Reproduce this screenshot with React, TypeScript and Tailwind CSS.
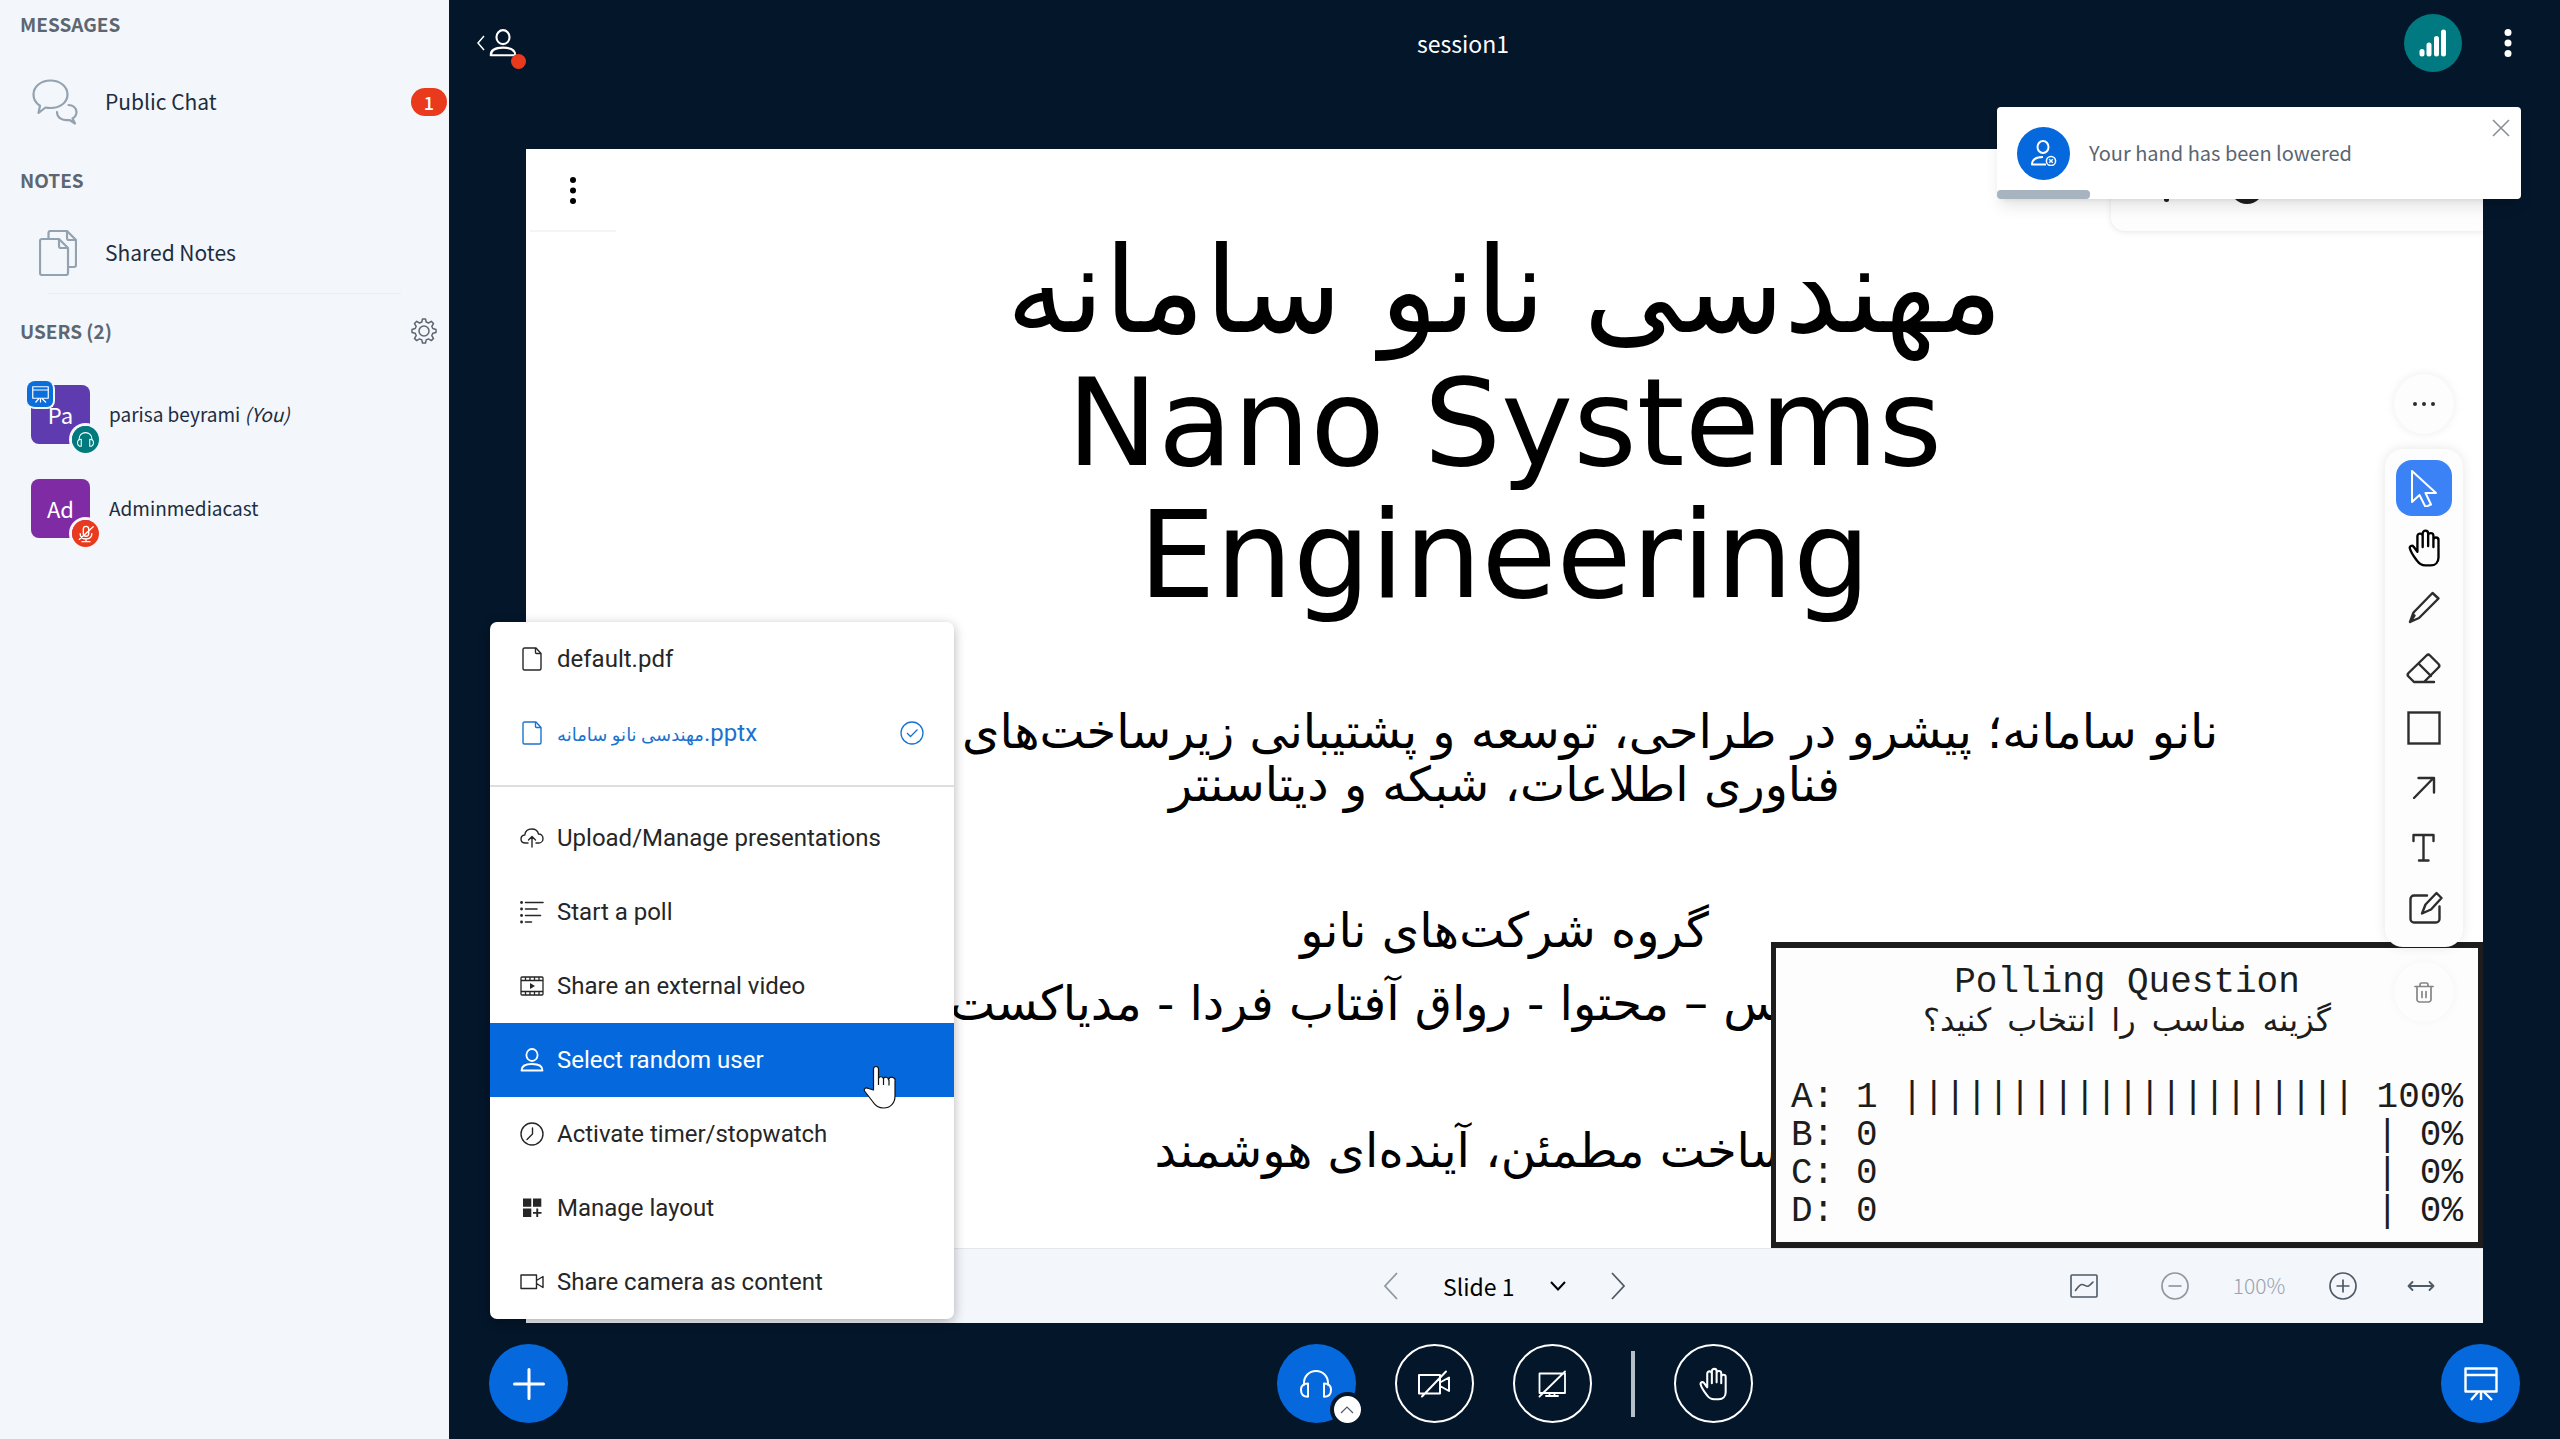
import type { ReactNode } from "react";
import clsx from "clsx";

type IconProps = { className?: string };

function UserIcon({ className }: IconProps) {
  return (
    <svg className={className} viewBox="0 0 24 24" fill="none" stroke="currentColor" strokeWidth="1.8" strokeLinejoin="round" aria-hidden="true">
      <ellipse cx="12" cy="7" rx="5.6" ry="6" />
      <path d="M1.5 22.5c0-4.2 3.8-6.5 10.5-6.5s10.500 2.300 10.500 6.500z" />
    </svg>
  );
}

function ChatIcon({ className }: IconProps) {
  return (
    <svg className={className} viewBox="0 0 46 46" fill="none" stroke="currentColor" strokeWidth="2.200" strokeLinejoin="round" strokeLinecap="round" aria-hidden="true">
      <path d="M18.500 1.500C9 1.500 1.500 7.500 1.500 15.500c0 5 2.500 8.800 6.500 11.300L6.500 34l7-5.500c1.500.400 3.200.500 5 .500 9.500 0 17-5.500 17-13.500s-7.500-14-17-14z" />
      <path d="M36.500 26c4.500 0 8 3 8 7 0 2.800-1.500 5-4 6.500l2.500 5-5.500-3.500c-7 1-12.500-2-12.500-8" />
    </svg>
  );
}

function NotesIcon({ className }: IconProps) {
  return (
    <svg className={className} viewBox="0 0 38 46" fill="none" stroke="currentColor" strokeWidth="2.200" strokeLinejoin="round" aria-hidden="true">
      <path d="M9.500 8.500V3a2 2 0 0 1 2-2H28l9 9v25a2 2 0 0 1-2 2h-5.500" />
      <path d="M28 1v7a2 2 0 0 0 2 2h7" />
      <path d="M1 11a2 2 0 0 1 2-2h17l9 9v25a2 2 0 0 1-2 2H3a2 2 0 0 1-2-2z" />
      <path d="M20 9v7a2 2 0 0 0 2 2h7" />
    </svg>
  );
}

function GearIcon({ className }: IconProps) {
  return (
    <svg className={className} viewBox="0 0 26 26" fill="none" stroke="currentColor" strokeWidth="1.500" strokeLinejoin="round" aria-hidden="true">
      <circle cx="13" cy="13" r="5" />
      <path d="M11.500 1h3l.7 3 2.300 1 2.800-1.700 2.200 2.200L20.800 8.300l1 2.200 3.200 1v3l-3.200.800-1 2.300 1.700 2.800-2.200 2.200-2.800-1.700-2.300 1-.7 3.100h-3l-.7-3.100-2.300-1-2.800 1.700-2.200-2.200 1.700-2.800-1-2.300L1 14.500v-3l3.200-1 1-2.200-1.700-2.800 2.200-2.200L8.500 5l2.300-1z" />
    </svg>
  );
}

function HeadphonesIcon({ className }: IconProps) {
  return (
    <svg className={className} viewBox="0 0 32 28" fill="none" stroke="currentColor" strokeWidth="2" strokeLinejoin="round" aria-hidden="true">
      <path d="M4 15.500V13C4 6.500 9 1 16 1s12 5.500 12 12v2.500" />
      <path d="M8 13.500v13.300c-4.500 0-7-2.500-7-6.800 0-4 2.500-6.500 7-6.500z" />
      <path d="M24 13.500v13.300c4.500 0 7-2.500 7-6.800 0-4-2.500-6.500-7-6.500z" />
    </svg>
  );
}

function MicMutedIcon({ className }: IconProps) {
  return (
    <svg className={className} viewBox="0 0 20 20" fill="none" stroke="currentColor" strokeWidth="1.500" strokeLinecap="round" aria-hidden="true">
      <rect x="7" y="1.500" width="6" height="11" rx="3" />
      <path d="M3.500 9.500c0 4 2.500 6 6.500 6s6.500-2 6.500-6M10 15.500V18M5.500 18.500h9M18 2 2.500 16" />
    </svg>
  );
}

function PresentationIcon({ className }: IconProps) {
  return (
    <svg className={className} viewBox="0 0 34 34" fill="none" stroke="currentColor" strokeWidth="2.400" strokeLinejoin="round" aria-hidden="true">
      <path d="M1.500 1.500h31v23h-31zM1.500 8h31" />
      <path d="M14 25 7 33M20 25l8 8M17 25v8" />
    </svg>
  );
}

function FileIcon({ className }: IconProps) {
  return (
    <svg className={className} viewBox="0 0 24 24" fill="none" stroke="currentColor" strokeWidth="1.400" strokeLinejoin="round" aria-hidden="true">
      <path d="M3 2.500A1.500 1.500 0 0 1 4.500 1h11.500l5 5.500v15a1.500 1.500 0 0 1-1.500 1.500h-15A1.500 1.500 0 0 1 3 21.500z" />
      <path d="M15.500 1v4.500a1 1 0 0 0 1 1H21" />
    </svg>
  );
}

function UploadIcon({ className }: IconProps) {
  return (
    <svg className={className} viewBox="0 0 24 24" fill="none" stroke="currentColor" strokeWidth="1.400" strokeLinejoin="round" strokeLinecap="round" aria-hidden="true">
      <path d="M8 17H5.500C2.800 17 1 15.200 1 13s1.600-3.800 3.800-4C5.200 5.400 8 3 11.800 3c3.500 0 6 2 6.700 5 2.600 0 4.500 1.900 4.500 4.400S21.100 17 18.700 17H16" />
      <path d="M12 21v-10M8.500 14 12 10.500l3.500 3.500" />
    </svg>
  );
}

function PollIcon({ className }: IconProps) {
  return (
    <svg className={className} viewBox="0 0 24 24" fill="none" stroke="currentColor" strokeWidth="1.600" strokeLinecap="round" aria-hidden="true">
      <path d="M5.500 2.500H23M5.500 9h11.500M5.500 15.500h15M5.500 22h6" />
      <path d="M1.500 2.500h.1M1.500 9h.1M1.500 15.500h.1M1.500 22h.1" strokeWidth="2.800" />
    </svg>
  );
}

function VideoFileIcon({ className }: IconProps) {
  return (
    <svg className={className} viewBox="0 0 24 24" fill="none" stroke="currentColor" strokeWidth="1.300" aria-hidden="true">
      <rect x="1" y="3" width="22" height="18" rx="1" />
      <path d="M1 6.500h22M1 17.500h22M5.500 3v3.500M10 3v3.500M14.500 3v3.500M19 3v3.500M5.500 17.500V21M10 17.500V21M14.500 17.500V21M19 17.500V21" />
      <path d="M10 9v6l5-3z" fill="currentColor" stroke="none" />
    </svg>
  );
}

function ClockIcon({ className }: IconProps) {
  return (
    <svg className={className} viewBox="0 0 24 24" fill="none" stroke="currentColor" strokeWidth="1.400" strokeLinecap="round" aria-hidden="true">
      <circle cx="12" cy="12" r="11" />
      <path d="M12.500 6v6L7 17.500" />
    </svg>
  );
}

function LayoutIcon({ className }: IconProps) {
  return (
    <svg className={className} viewBox="0 0 24 24" fill="currentColor" aria-hidden="true">
      <path d="M3 2.500h8.300v8.300H3zM13 2.500h8.300v8.300H13zM3 12.600h8.300V21H3zM16.300 12.600h1.900v3.300h3.300v1.900h-3.300V21h-1.900v-3.200H13v-1.900h3.300z" />
    </svg>
  );
}

function CameraIcon({ className }: IconProps) {
  return (
    <svg className={className} viewBox="0 0 24 24" fill="none" stroke="currentColor" strokeWidth="1.400" strokeLinejoin="round" aria-hidden="true">
      <path d="M1 5h15.500v13.500H1zM16.500 10.500l6.500-4v11l-6.500-4z" />
    </svg>
  );
}

function CameraOffIcon({ className }: IconProps) {
  return (
    <svg className={className} viewBox="0 0 34 28" fill="none" stroke="currentColor" strokeWidth="2" strokeLinejoin="round" strokeLinecap="round" aria-hidden="true">
      <path d="M2 5h21v18.500H2zM23 12.500l9-5v13.500l-9-5M5 26.500 29 1.500" />
    </svg>
  );
}

function ScreenOffIcon({ className }: IconProps) {
  return (
    <svg className={className} viewBox="0 0 28 28" fill="none" stroke="currentColor" strokeWidth="1.800" strokeLinejoin="round" strokeLinecap="round" aria-hidden="true">
      <path d="M1.500 3.500h25.500v19.500H1.500zM8 26h12M11.500 23.500V26M16.500 23.500V26M1.500 26.500 27 1.500" />
    </svg>
  );
}

function HandIcon({ className }: IconProps) {
  return (
    <svg className={className} viewBox="0 0 34 40" fill="none" stroke="currentColor" strokeWidth="2.500" strokeLinejoin="round" strokeLinecap="round" aria-hidden="true">
      <path d="M10 20V7.500a2.800 2.800 0 0 1 5.600 0V19M15.600 18V4.500a2.900 2.900 0 0 1 5.800 0V18M21.400 7a2.800 2.800 0 0 1 5.600 0v12M27 11.500a2.700 2.700 0 0 1 5.400 0V30c0 5-3.400 8.500-8.400 8.500h-5.500c-4 0-6.500-1.500-8.500-4.500C7.500 30.500 3.500 26 2 20.500c-.7-2.500 2.300-3.800 4-1.800l4 5.300V19" />
    </svg>
  );
}

function KickIcon({ className }: IconProps) {
  return (
    <svg className={className} viewBox="0 0 26 26" fill="none" stroke="currentColor" strokeWidth="2" strokeLinejoin="round" aria-hidden="true">
      <ellipse cx="12" cy="7" rx="5.500" ry="6" />
      <path d="M15 24.500H1c0-5 4-7.500 11-7.500" />
      <circle cx="20" cy="21" r="4.600" strokeWidth="1.500" />
      <path d="m18.200 19.200 3.600 3.600m0-3.600-3.600 3.600" strokeWidth="1.400" />
    </svg>
  );
}

const chats: { label: string; icon: ReactNode; unread?: number }[] = [
  { label: "Public Chat", icon: <ChatIcon className="size-[46px]" />, unread: 1 },
];

const files = [
  { name: "default", extension: ".pdf", current: false },
  { name: "مهندسی نانو سامانه", extension: ".pptx", current: true },
];

const actions = [
  { label: "Upload/Manage presentations", Icon: UploadIcon },
  { label: "Start a poll", Icon: PollIcon },
  { label: "Share an external video", Icon: VideoFileIcon },
  { label: "Select random user", Icon: UserIcon, active: true },
  { label: "Activate timer/stopwatch", Icon: ClockIcon },
  { label: "Manage layout", Icon: LayoutIcon },
  { label: "Share camera as content", Icon: CameraIcon },
];

const answers = [
  { key: "A", votes: 1, percent: 100 },
  { key: "B", votes: 0, percent: 0 },
  { key: "C", votes: 0, percent: 0 },
  { key: "D", votes: 0, percent: 0 },
];

const toolStroke = {
  fill: "none",
  stroke: "currentColor",
  strokeWidth: 2.4,
  strokeLinejoin: "round",
  strokeLinecap: "round",
} as const;

const tools: { name: string; drawing: ReactNode }[] = [
  {
    name: "Select",
    drawing: <path d="M7 2v31l7.500-7 6 12 5.500-2.500L20.500 24H31z" strokeWidth="2" />,
  },
  { name: "Hand", drawing: null },
  {
    name: "Draw",
    drawing: <path d="M5 33 8.500 23.500 27.500 4l6 5.500L14 29zM5 33l4.500-6.500" />,
  },
  {
    name: "Eraser",
    drawing: <path d="M29 33H9l-5.500-5.500a2.500 2.500 0 0 1 0-3.500L21.500 6.500a2.500 2.500 0 0 1 3.500 0l8.500 8.500a2.500 2.500 0 0 1 0 3.500L19 33M13.500 14.500 26 27" />,
  },
  { name: "Rectangle", drawing: <rect x="3.500" y="3.500" width="31" height="31" strokeLinejoin="miter" /> },
  { name: "Arrow", drawing: <path d="M9 29 28 9.500M13.500 9H29v14.500" /> },
  { name: "Text", drawing: <path d="M8.500 12V6h20v6M18.500 6v25.500M14 31.500h9.500" /> },
  {
    name: "Note",
    drawing: (
      <path d="M22 6.500H9A3.500 3.500 0 0 0 5.500 10v20A3.500 3.500 0 0 0 9 33.500h22a3.500 3.500 0 0 0 3.500-3.500V17.500M31.500 4l5 5-10.500 11.500L17 24.500l3.500-9z" />
    ),
  },
];

function SectionTitle({ children }: { children: ReactNode }) {
  return <h2 className="text-[19px] leading-7 font-semibold text-[#5d6771]">{children}</h2>;
}

function Avatar({ initials, color, badge, presenter }: { initials: string; color: string; badge: ReactNode; presenter?: boolean }) {
  return (
    <span className={clsx("relative flex size-[59px] shrink-0 items-center justify-center rounded-lg text-[22px] text-white", color)}>
      {initials}
      {presenter && (
        <span className="absolute -top-1 -left-1 flex size-7 items-center justify-center rounded-lg border-r-2 border-b-2 border-[#f3f6fb] bg-[#0a6fdc]">
          <PresentationIcon className="size-[17px]" />
        </span>
      )}
      <span className="absolute -right-3 -bottom-3 rounded-full border-3 border-[#f3f6fb]">{badge}</span>
    </span>
  );
}

function Sidebar() {
  return (
    <aside className="flex w-[449px] shrink-0 flex-col bg-[#f3f6fb] text-[21px] text-[#1c2d40]">
      <div className="px-5 pt-[10px]">
        <SectionTitle>MESSAGES</SectionTitle>
      </div>
      {chats.map((chat) => (
        <a key={chat.label} href="#chat" className="mt-[29px] flex h-[70px] items-center pr-[2px] pl-8">
          <span className="w-[73px] text-[#93a2b1]">{chat.icon}</span>
          <span className="flex-1">{chat.label}</span>
          <span className="flex h-7 w-9 items-center justify-center rounded-full bg-[#ea3a1e] text-lg font-medium text-white">{chat.unread}</span>
        </a>
      ))}
      <div className="mt-[29px] px-5">
        <SectionTitle>NOTES</SectionTitle>
      </div>
      <a href="#notes" className="mt-6 flex h-[70px] items-center pl-[39px]">
        <span className="w-[66px] text-[#93a2b1]">
          <NotesIcon className="h-[46px] w-[38px]" />
        </span>
        Shared Notes
      </a>
      <hr className="mx-12 mt-[5px] border-0 border-t border-[#eaeef3]" />
      <div className="mt-[23px] flex items-center justify-between pr-3 pl-5">
        <SectionTitle>USERS (2)</SectionTitle>
        <button type="button" aria-label="Manage users" className="text-[#5d6771]">
          <GearIcon className="size-[26px]" />
        </button>
      </div>
      <ul className="mt-10 flex flex-col gap-[35px] pl-[31px] text-[19px]">
        <li className="flex items-center gap-[19px]">
          <Avatar
            initials="Pa"
            color="bg-[#5e3cb0]"
            presenter
            badge={
              <span className="flex size-[27px] items-center justify-center rounded-full bg-[#007a7c]">
                <HeadphonesIcon className="h-[15px] w-[17px]" />
              </span>
            }
          />
          <span>
            parisa beyrami <em>(You)</em>
          </span>
        </li>
        <li className="flex items-center gap-[19px]">
          <Avatar
            initials="Ad"
            color="bg-[#7f2ba4]"
            badge={
              <span className="flex size-[27px] items-center justify-center rounded-full bg-[#ea3a1e]">
                <MicMutedIcon className="size-[18px]" />
              </span>
            }
          />
          <span>Adminmediacast</span>
        </li>
      </ul>
    </aside>
  );
}

function Header() {
  return (
    <header className="flex h-[86px] items-center pr-[38px] pl-7 text-white">
      <button type="button" aria-label="Toggle user list" className="relative flex w-[45px] items-center">
        <svg className="h-4 w-2" viewBox="0 0 8 16" fill="none" stroke="currentColor" strokeWidth="1.500" aria-hidden="true">
          <path d="M7 1 1 8l6 7" />
        </svg>
        <UserIcon className="ml-1 size-7" />
        <span className="absolute -bottom-3 left-[34px] size-[15px] rounded-full bg-[#ea3a1e]" />
      </button>
      <h1 className="flex-1 text-center text-[23px]">session1</h1>
      <div className="flex items-center gap-8">
        <button type="button" aria-label="Connection status" className="flex size-[58px] items-center justify-center rounded-full bg-[#007a80]">
          <svg className="size-7" viewBox="0 0 28 28" stroke="currentColor" strokeWidth="5" strokeLinecap="round" aria-hidden="true">
            <path d="M3 25v-2.500M10 25v-9M17.500 25V9.500M24.500 25V3" />
          </svg>
        </button>
        <button type="button" aria-label="Options" className="flex w-7 justify-center">
          <svg className="h-7 w-2" viewBox="0 0 8 28" fill="currentColor" aria-hidden="true">
            <circle cx="4" cy="3.500" r="3.500" />
            <circle cx="4" cy="14" r="3.500" />
            <circle cx="4" cy="24.500" r="3.500" />
          </svg>
        </button>
      </div>
    </header>
  );
}

function Toast() {
  return (
    <div role="status" className="absolute top-[107px] right-[39px] z-20 flex h-[92px] w-[524px] items-center rounded bg-white pl-5 shadow-lg">
      <span className="flex size-[53px] items-center justify-center rounded-full bg-[#0569dd] text-white">
        <KickIcon className="size-[26px]" />
      </span>
      <p className="ml-[19px] text-[20px] text-[#5a6572]">Your hand has been lowered</p>
      <button type="button" aria-label="Close" className="absolute top-3 right-[11px] text-[#858b93]">
        <svg className="size-[18px]" viewBox="0 0 18 18" stroke="currentColor" strokeWidth="1.500" aria-hidden="true">
          <path d="m1 1 16 16M17 1 1 17" />
        </svg>
      </button>
      <span className="absolute bottom-0 left-0 h-[9px] w-[93px] rounded bg-[#a7b3bf]" />
    </div>
  );
}

function Poll() {
  return (
    <div className="absolute right-0 bottom-0 w-[712px] border-x-[5px] border-y-[6px] border-[#1d1d1d] bg-[#fdfdfd] px-[15px] font-['Liberation_Mono',monospace] text-[36px] leading-[38px] text-[#1d1d1d]">
      <div className="pt-4 text-center">
        <p>Polling Question</p>
        <p dir="rtl" className="h-[38px] font-['Noto_Sans_Mono_CJK_SC','DejaVu_Sans',sans-serif] text-[32px] leading-[30px]">
          گزینه مناسب را انتخاب کنید؟
        </p>
      </div>
      <table className="mt-[39px] mb-[11px] w-full">
        <tbody>
          {answers.map((a) => (
            <tr key={a.key}>
              <td className="w-[65px] p-0">{a.key}:</td>
              <td className="p-0">{a.votes}</td>
              <td className="p-0 text-right">
                {"|".repeat(a.percent ? 21 : 1)} {a.percent}%
              </td>
            </tr>
          ))}
        </tbody>
      </table>
    </div>
  );
}

function Toolbar() {
  return (
    <div className="absolute top-[225px] right-5 flex flex-col items-center gap-[15px] text-[#2d2d2d]">
      <button type="button" aria-label="More" className="flex size-[60px] items-center justify-center rounded-full bg-[#fdfdfd] shadow-[0_0_10px_rgba(0,0,0,0.08)]">
        <svg className="h-1 w-[22px]" viewBox="0 0 22 4" fill="currentColor" aria-hidden="true">
          <circle cx="2" cy="2" r="2" />
          <circle cx="11" cy="2" r="2" />
          <circle cx="20" cy="2" r="2" />
        </svg>
      </button>
      <div className="flex flex-col gap-1 rounded-[18px] bg-[#fdfdfd] px-[11px] py-[11px] shadow-[0_0_12px_rgba(0,0,0,0.1)]">
        {tools.map((tool, i) => (
          <button
            key={tool.name}
            type="button"
            aria-label={tool.name}
            className={clsx("flex size-14 items-center justify-center rounded-2xl", i === 0 && "bg-[#3b82f6] text-white", i === 1 && "text-black")}
          >
            {tool.drawing ? (
              <svg className="size-[38px]" viewBox="0 0 38 38" {...toolStroke} aria-hidden="true">
                {tool.drawing}
              </svg>
            ) : (
              <HandIcon className="h-[38px] w-8" />
            )}
          </button>
        ))}
      </div>
      <button type="button" aria-label="Delete" className="flex size-[60px] items-center justify-center rounded-full bg-[#fdfdfd] text-[#858585] shadow-[0_0_10px_rgba(0,0,0,0.04)]">
        <svg className="size-[22px]" viewBox="0 0 22 22" fill="none" stroke="currentColor" strokeWidth="1.700" strokeLinejoin="round" strokeLinecap="round" aria-hidden="true">
          <path d="M2 5.500h18M7 5.500V3.500A1.500 1.500 0 0 1 8.500 2h5A1.500 1.500 0 0 1 15 3.500v2M4 5.500v13A2.500 2.500 0 0 0 6.500 21h9a2.500 2.500 0 0 0 2.500-2.500v-13M9 10.500v6M13 10.500v6" />
        </svg>
      </button>
    </div>
  );
}

function Slide() {
  return (
    <div className="relative flex-1 overflow-hidden bg-white font-['DejaVu_Sans',sans-serif] text-black">
      <h2 className="mt-[75px] text-center text-[122px] leading-[132px]">
        <span dir="rtl" className="text-[120px]">
          مهندسی نانو سامانه
        </span>
        <br />
        Nano Systems
        <br />
        Engineering
      </h2>
      <div dir="rtl" className="mt-[84px] text-center text-[48px] leading-[53px]">
        <p className="pr-[265px] text-right">نانو سامانه؛ پیشرو در طراحی، توسعه و پشتیبانی زیرساخت‌های</p>
        <p>فناوری اطلاعات، شبکه و دیتاسنتر</p>
        <p className="mt-[93px]">گروه شرکت‌های نانو</p>
        <p className="mt-5 pl-[424px] text-left">رس – محتوا - رواق آفتاب فردا - مدیاکست</p>
        <p className="mt-[94px]">زیرساخت مطمئن، آینده‌ای هوشمند</p>
      </div>
      <button type="button" aria-label="Presentation options" className="absolute top-0 left-0 flex h-[83px] w-[94px] items-center justify-center">
        <svg className="h-7 w-2" viewBox="0 0 8 28" fill="currentColor" aria-hidden="true">
          <circle cx="4" cy="3" r="3" />
          <circle cx="4" cy="13.500" r="3" />
          <circle cx="4" cy="24" r="3" />
        </svg>
        <span className="absolute bottom-0 left-1 h-[2px] w-[86px] bg-[#f4f4f4]" />
      </button>
      {/* Style panel, mostly under the toast */}
      <div className="absolute top-0 right-0 h-[82px] w-[372px] rounded-bl-[14px] bg-[#fdfdfd] shadow-[0_1px_6px_rgba(0,0,0,0.1)]">
        <span className="absolute top-[21px] left-[119px] size-[34px] rounded-full bg-[#1d1d1d]" />
        <span className="absolute top-[48px] left-[53px] h-[5px] w-[5px] rounded-full bg-[#1d1d1d]" />
      </div>
      <Poll />
      <Toolbar />
    </div>
  );
}

function SlideControls() {
  return (
    <div className="grid h-[75px] grid-cols-[1fr_auto_1fr] items-center border-t border-[#e3e7eb] bg-[#f3f6fb] text-[#4e5a66]">
      <span />
      <div className="flex items-center gap-[45px]">
        <button type="button" aria-label="Previous slide" className="opacity-60">
          <svg className="h-7 w-[14px]" viewBox="0 0 14 28" fill="none" stroke="currentColor" strokeWidth="1.800" aria-hidden="true">
            <path d="M13 1 1 14l12 13" />
          </svg>
        </button>
        <div className="relative flex items-center text-black">
          <select aria-label="Slide" className="w-[123px] appearance-none bg-transparent text-[23px]">
            <option>Slide 1</option>
          </select>
          <svg className="pointer-events-none absolute right-0 h-[10px] w-4" viewBox="0 0 16 10" fill="none" stroke="currentColor" strokeWidth="2" aria-hidden="true">
            <path d="m1 1 7 7.500L15 1" />
          </svg>
        </div>
        <button type="button" aria-label="Next slide">
          <svg className="h-7 w-[14px]" viewBox="0 0 14 28" fill="none" stroke="currentColor" strokeWidth="1.800" aria-hidden="true">
            <path d="m1 1 12 13L1 27" />
          </svg>
        </button>
      </div>
      <div className="flex items-center justify-end pr-12">
        <button type="button" aria-label="Whiteboard">
          <svg className="mr-[63px] h-6 w-7" viewBox="0 0 28 24" fill="none" stroke="currentColor" strokeWidth="1.600" strokeLinecap="round" aria-hidden="true">
            <rect x="1" y="1" width="26" height="22" rx="1" />
            <path d="M5.500 16.500C8 13 9.500 10.500 12 10.500s4 2.500 6.500 1.500c2-1 3-2.500 4.500-4" />
          </svg>
        </button>
        <button type="button" aria-label="Zoom out" className="opacity-60">
          <svg className="size-7" viewBox="0 0 28 28" fill="none" stroke="currentColor" strokeWidth="1.700" aria-hidden="true">
            <circle cx="14" cy="14" r="13" />
            <path d="M7.500 14h13" />
          </svg>
        </button>
        <span className="w-[140px] text-center text-[21px] font-light text-[#9aa3ad]">100%</span>
        <button type="button" aria-label="Zoom in">
          <svg className="size-7" viewBox="0 0 28 28" fill="none" stroke="currentColor" strokeWidth="1.700" aria-hidden="true">
            <circle cx="14" cy="14" r="13" />
            <path d="M7.500 14h13M14 7.500v13" />
          </svg>
        </button>
        <button type="button" aria-label="Fit to width">
          <svg className="ml-[50px] h-3 w-7" viewBox="0 0 28 12" fill="none" stroke="currentColor" strokeWidth="1.800" strokeLinejoin="round" strokeLinecap="round" aria-hidden="true">
            <path d="M1.500 6h25M5.500 2l-4 4 4 4M22.500 2l4 4-4 4" />
          </svg>
        </button>
      </div>
    </div>
  );
}

function ActionsMenu() {
  return (
    <div role="menu" className="absolute bottom-[120px] left-[41px] z-10 flex w-[464px] flex-col overflow-hidden rounded-[7px] bg-white font-[Roboto,'DejaVu_Sans',sans-serif] text-[24px] text-[#262626] shadow-[0_3px_12px_rgba(0,0,0,0.3)]">
      {files.map((file) => (
        <button key={file.name} type="button" role="menuitem" className={clsx("flex h-[74px] items-center gap-[13px] px-[30px]", file.current && "text-[#1a73d0]")}>
          <FileIcon className="size-6" />
          <span>
            <span className={clsx(file.current && "text-[18px]")}>{file.name}</span>
            {file.extension}
          </span>
          {file.current && (
            <svg className="ml-auto size-6" viewBox="0 0 24 24" fill="none" stroke="currentColor" strokeWidth="1.300" aria-hidden="true">
              <circle cx="12" cy="12" r="11" />
              <path d="m7 12 3.500 3.500 7-7" />
            </svg>
          )}
        </button>
      ))}
      <hr className="mt-[15px] mb-[14px] border-0 border-t-2 border-[#dcdfe2]" />
      {actions.map(({ label, Icon, active }) => (
        <button key={label} type="button" role="menuitem" className={clsx("flex h-[74px] items-center gap-[13px] px-[30px]", active && "bg-[#0569dd] text-white")}>
          <Icon className="size-6" />
          {label}
        </button>
      ))}
      {/* Pointer over the highlighted item */}
      <svg className="absolute top-[443px] left-[373px] h-11 w-[34px]" viewBox="0 0 34 44" fill="white" stroke="#111" strokeWidth="1.200" strokeLinejoin="round" aria-hidden="true">
        <path d="M10.500 25V4a2.500 2.500 0 0 1 5 0v9.500a2.600 2.600 0 0 1 5 .300 2.600 2.600 0 0 1 5 1 2.600 2.600 0 0 1 6.500 1.700V31c0 7-4.500 12-11.500 12-5 0-8-2-10.500-6L1.500 26c-1-2.500 1.500-4 4-2.500z" />
        <path d="M15.500 13v7M20.500 14v6M26 15v5.500" />
      </svg>
    </div>
  );
}

const roundButton = "flex size-[79px] items-center justify-center rounded-full text-white";

function ActionsBar() {
  return (
    <footer className="flex h-[116px] items-center justify-between px-10 pt-[5px]">
      <button type="button" aria-label="Actions" className={clsx(roundButton, "bg-[#0569dd]")}>
        <svg className="size-8" viewBox="0 0 32 32" stroke="currentColor" strokeWidth="3" strokeLinecap="round" aria-hidden="true">
          <path d="M16 1.500v29M1.500 16h29" />
        </svg>
      </button>
      <div className="ml-5 flex items-center gap-[39px]">
        <div className="relative">
          <button type="button" aria-label="Leave audio" className={clsx(roundButton, "bg-[#0569dd]")}>
            <HeadphonesIcon className="h-7 w-8" />
          </button>
          <button type="button" aria-label="Change audio device" className="absolute -right-[9px] -bottom-1 flex size-[35px] items-center justify-center rounded-full border-4 border-[#04162a] bg-white text-[#4e5a66]">
            <svg className="h-2 w-[14px]" viewBox="0 0 14 8" fill="none" stroke="currentColor" strokeWidth="1.200" aria-hidden="true">
              <path d="m1 7 6-6 6 6" />
            </svg>
          </button>
        </div>
        <button type="button" aria-label="Share webcam" className={clsx(roundButton, "border-2 border-white")}>
          <CameraOffIcon className="h-7 w-[34px]" />
        </button>
        <button type="button" aria-label="Share your screen" className={clsx(roundButton, "border-2 border-white")}>
          <ScreenOffIcon className="size-7" />
        </button>
        <span className="h-[66px] w-1 bg-[#b5bfca]" />
        <button type="button" aria-label="Raise your hand" className={clsx(roundButton, "border-2 border-white")}>
          <HandIcon className="h-[34px] w-7" />
        </button>
      </div>
      <button type="button" aria-label="Minimize presentation" className={clsx(roundButton, "bg-[#0569dd]")}>
        <PresentationIcon className="size-[34px]" />
      </button>
    </footer>
  );
}

export default function App() {
  return (
    <div className="flex min-h-screen bg-[#04162a] font-['Noto_Sans_CJK_SC',sans-serif]">
      <Sidebar />
      <main className="relative flex min-w-0 flex-1 flex-col">
        <Header />
        <section className="mx-[77px] mt-[63px] flex flex-1 flex-col">
          <Slide />
          <SlideControls />
        </section>
        <ActionsBar />
        <ActionsMenu />
        <Toast />
      </main>
    </div>
  );
}
